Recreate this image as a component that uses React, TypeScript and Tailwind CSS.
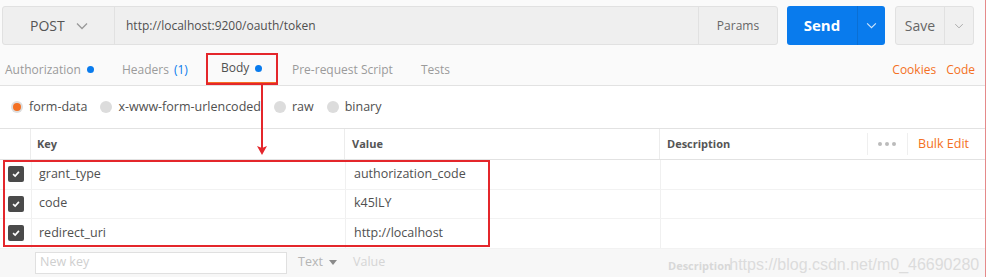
import React from "react";

const tabs = [
  { name: "Authorization", dot: true, cls: "w-[122px] pl-[5px]" },
  { name: "Headers", count: "(1)", cls: "w-[84px]" },
  { name: "Body", dot: true, active: true, cls: "w-[71px] pl-[15px]" },
  { name: "Pre-request Script", cls: "w-[144px] pl-[15px]" },
  { name: "Tests", cls: "w-[60px]" },
];

const bodyTypes = [
  { name: "form-data", on: true },
  { name: "x-www-form-urlencoded" },
  { name: "raw" },
  { name: "binary" },
];

const rows = [
  { key: "grant_type", value: "authorization_code" },
  { key: "code", value: "k45lLY" },
  { key: "redirect_uri", value: "http://localhost" },
];

function Chevron({ className = "" }: { className?: string }) {
  return (
    <svg viewBox="0 0 12 8" className={className} fill="none" stroke="currentColor" strokeWidth="1.3">
      <path d="M1 1.5 6 6.5 11 1.5" />
    </svg>
  );
}

function Check() {
  return (
    <div className="w-[16px] h-[16px] rounded-[2px] bg-[#4a4a4a] flex items-center justify-center">
      <svg viewBox="0 0 12 12" className="w-[10px] h-[10px]" fill="none" stroke="white" strokeWidth="2">
        <path d="M2.5 6.2 5 8.5 9.5 3.5" />
      </svg>
    </div>
  );
}

export default function App() {
  return (
    <div
      className="relative w-[988px] h-[277px] bg-white overflow-hidden text-[#505050]"
      style={{ fontFamily: '"Open Sans", "Liberation Sans", sans-serif' }}
    >
      <div className="w-[986px] h-full border-r border-[#e58a8a] flex flex-col">
        {/* url bar */}
        <div className="h-[48px] bg-[#fafafa] flex items-start pt-[6px] pl-[2px]">
          <div className="flex h-[39px] w-[776px] rounded-[3px] border border-[#e1e1e1] bg-[#efefef]">
            <div className="w-[112px] flex items-center pl-[27px] gap-[11px] border-r border-[#e1e1e1] text-[14px] text-[#555]">
              POST
              <Chevron className="w-[12px] h-[8px] text-[#999]" />
            </div>
            <div className="flex-1 flex items-center pl-[11px] text-[12px] text-[#505050]">
              http://localhost:9200/oauth/token
            </div>
            <div className="w-[79px] flex items-center justify-center border-l border-[#e1e1e1] text-[12px] text-[#666]">
              Params
            </div>
          </div>
          <div className="ml-[9px] flex h-[39px] w-[98px] rounded-[3px] bg-[#097bed] text-white">
            <div className="w-[70px] flex items-center justify-center text-[15px] font-bold">Send</div>
            <div className="flex-1 flex items-center justify-center border-l border-[#0a6fd4]">
              <Chevron className="w-[11px] h-[7px] text-white/80" />
            </div>
          </div>
          <div className="ml-[10px] flex h-[39px] w-[79px] rounded-[3px] border border-[#e1e1e1] bg-[#f0f0f0]">
            <div className="w-[48px] flex items-center justify-center text-[14px] text-[#666]">Save</div>
            <div className="flex-1 flex items-center justify-center border-l border-[#e1e1e1]">
              <Chevron className="w-[10px] h-[6px] text-[#aaa]" />
            </div>
          </div>
        </div>

        {/* tabs */}
        <div className="h-[38px] bg-[#fafafa] border-b border-[#e2e2e2] flex items-stretch text-[12px]">
          {tabs.map((t) => (
            <div
              key={t.name}
              className={[
                "flex items-center gap-[5px] pt-[6px] shrink-0",
                t.cls,
                t.active ? "text-[#505050] border-b-2 border-[#f47023] mb-[1px]" : "text-[#9b9b9b]",
              ].join(" ")}
            >
              {t.name}
              {t.count && <span className="text-[#097bed]">{t.count}</span>}
              {t.dot && <span className="w-[7px] h-[7px] rounded-full bg-[#097bed] ml-[1px]" />}
            </div>
          ))}
          <div className="ml-auto flex items-center pt-[6px] gap-[10px] pr-[10px] text-[#f47023]">
            <span>Cookies</span>
            <span>Code</span>
          </div>
        </div>

        {/* body type */}
        <div className="h-[42px] flex items-center pl-[11px] text-[12.5px]">
          {bodyTypes.map((b) => (
            <div key={b.name} className="flex items-center gap-[6px] mr-[13px]">
              {b.on ? (
                <span className="w-[12px] h-[12px] rounded-full bg-[#dedede] flex items-center justify-center">
                  <span className="w-[8px] h-[8px] rounded-full bg-[#f47023]" />
                </span>
              ) : (
                <span className="w-[12px] h-[12px] rounded-full bg-[#dcdcdc]" />
              )}
              <span>{b.name}</span>
            </div>
          ))}
        </div>

        {/* table header */}
        <div className="h-[32px] flex border-t border-b border-[#e2e2e2] text-[11px] font-bold text-[#555]">
          <div className="w-[31px] border-r border-[#ececec]" />
          <div className="w-[314px] border-r border-[#ececec] flex items-center pl-[6px]">Key</div>
          <div className="w-[315px] border-r border-[#ececec] flex items-center pl-[7px]">Value</div>
          <div className="flex-1 flex items-center pl-[7px]">
            Description
            <div className="ml-auto flex h-full items-center">
              <div className="h-[22px] border-l border-[#efefef] w-[11px]" />
              <div className="flex gap-[3px] pr-[11px]">
                <span className="w-[4px] h-[4px] rounded-full bg-[#bbb]" />
                <span className="w-[4px] h-[4px] rounded-full bg-[#bbb]" />
                <span className="w-[4px] h-[4px] rounded-full bg-[#bbb]" />
              </div>
              <div className="h-[22px] border-l border-[#efefef] pl-[10px] pr-[16px] flex items-center text-[12.5px] font-normal text-[#f47023]">
                Bulk Edit
              </div>
            </div>
          </div>
        </div>

        {/* rows */}
        {rows.map((r) => (
          <div key={r.key} className="h-[29.5px] flex border-b border-[#f2f2f2] text-[12.5px]">
            <div className="w-[31px] flex items-center justify-center pl-[1px]">
              <Check />
            </div>
            <div className="w-[314px] border-l border-[#f0f0f0] flex items-center pl-[7px]">{r.key}</div>
            <div className="w-[315px] border-l border-[#f0f0f0] flex items-center pl-[8px]">{r.value}</div>
            <div className="flex-1 border-l border-[#f0f0f0]" />
          </div>
        ))}

        {/* new row */}
        <div className="flex-1 bg-[#f7f7f7] flex items-center text-[12.5px]">
          <div className="w-[35px]" />
          <div className="w-[252px] h-[22px] bg-white border border-[#e0e0e0] flex items-center pl-[4px] text-[#cfcfcf]">
            New key
          </div>
          <div className="w-[58px] flex items-center gap-[6px] pl-[11px] text-[#b5b5b5]">
            Text
            <svg viewBox="0 0 8 5" className="w-[8px] h-[5px]" fill="#8a8a8a">
              <path d="M0 0h8L4 5z" />
            </svg>
          </div>
          <div className="w-[315px] pl-[8px] text-[#d5d5d5]">Value</div>
          <div className="flex items-end gap-0 pl-[8px] pt-[6px]">
            <span className="text-[11px] font-bold text-[#d8d8d8]">Description</span>
            <span
              className="text-[16px] text-[#dcdcdc] leading-none mb-[1px] -ml-[2px]"
              style={{ fontFamily: '"Liberation Sans", Arial, sans-serif' }}
            >
              https://blog.csdn.net/m0_46690280
            </span>
          </div>
        </div>
      </div>

      {/* annotations */}
      <div className="absolute left-[206px] top-[53px] w-[72px] h-[32px] border-2 border-[#e4262b]" />
      <div className="absolute left-[261px] top-[85px] w-[1.5px] h-[63px] bg-[#e4262b]" />
      <svg className="absolute left-[257px] top-[146px] w-[10px] h-[9px]" viewBox="0 0 10 9">
        <path d="M0 0 5 9 10 0 5 2z" fill="#e4262b" />
      </svg>
      <div className="absolute left-[3px] top-[160px] w-[487px] h-[87px] border-2 border-[#e4262b]" />
    </div>
  );
}
